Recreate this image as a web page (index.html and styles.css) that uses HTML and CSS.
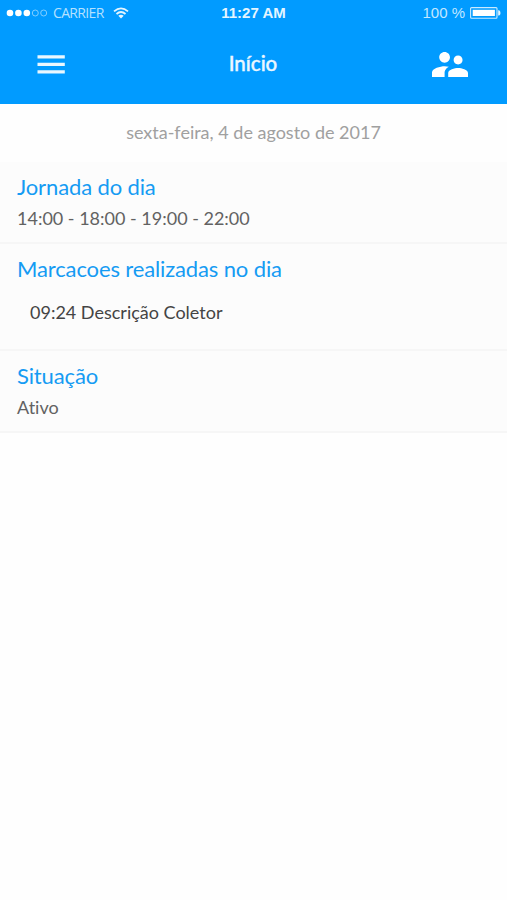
FILE: index.html
```html
<!DOCTYPE html>
<html lang="pt-BR">
<head>
<meta charset="utf-8">
<title>Início</title>
<link rel="stylesheet" href="styles.css">
</head>
<body>
<header class="header">
  <div class="status">
    <div class="status-left">
      <svg class="signal" width="42" height="10" viewBox="0 0 42 10"><g fill="#fff"><circle cx="4" cy="5" r="3.3"/><circle cx="12.4" cy="5" r="3.3"/><circle cx="20.8" cy="5" r="3.3"/></g><g fill="none" stroke="#8fd2ff" stroke-width=".9"><circle cx="29.3" cy="5" r="3"/><circle cx="37.7" cy="5" r="3"/></g></svg>
      <span class="carrier">CARRIER</span>
      <svg class="wifi" width="16" height="12" viewBox="0 0 16 12"><g fill="none" stroke="#e4f5ff" stroke-width="1.8"><path d="M1 4.4Q8-1.6 15 4.4"/><path d="M3.5 7Q8 3 12.5 7"/></g><path fill="#e4f5ff" d="M5.3 8.8Q8 6.5 10.7 8.8L8 11.6z"/></svg>
    </div>
    <span class="clock">11:27 AM</span>
    <div class="status-right">
      <span class="percent">100 %</span>
      <svg class="battery" width="31" height="12" viewBox="0 0 31 12"><rect x=".6" y=".6" width="26.4" height="10.6" rx="1" fill="none" stroke="#c9eaff" stroke-width="1.1"/><rect x="2.7" y="2.8" width="22.2" height="6.2" fill="#fff"/><path fill="#e4f5ff" d="M28.2 3.2h1q1.3 1 1.3 2.7t-1.3 2.7h-1z"/></svg>
    </div>
  </div>
  <nav class="nav">
    <svg class="menu" width="28" height="19" viewBox="0 0 28 19"><path fill="#e9f7ff" d="M.5.3h27.3v3.1H.5zM.5 7.8h27.3v3.1H.5zM.5 15.3h27.3v3.1H.5z"/></svg>
    <h1 class="title">Início</h1>
    <svg class="people" width="36" height="25" viewBox="2 5 20 14" preserveAspectRatio="none"><path fill="#fff" d="M16.5 12c1.38 0 2.49-1.12 2.49-2.5S17.88 7 16.5 7 14 8.12 14 9.5s1.12 2.5 2.5 2.5zM9 11c1.66 0 2.99-1.34 2.99-3S10.66 5 9 5 6 6.34 6 8s1.34 3 3 3zm7.5 3c-1.83 0-5.5.92-5.5 2.75V19h11v-2.25c0-1.83-3.67-2.75-5.5-2.75zM9 13c-2.33 0-7 1.17-7 3.5V19h7v-2.25c0-.85.33-2.34 2.37-3.47C10.5 13.1 9.66 13 9 13z"/></svg>
  </nav>
</header>
<main>
  <p class="date">sexta-feira, 4 de agosto de 2017</p>
  <section class="item">
    <h2 class="heading">Jornada do dia</h2>
    <p class="text">14:00 - 18:00 - 19:00 - 22:00</p>
  </section>
  <section class="item item-marks">
    <h2 class="heading">Marcacoes realizadas no dia</h2>
    <p class="mark">09:24 Descrição Coletor</p>
  </section>
  <section class="item">
    <h2 class="heading">Situação</h2>
    <p class="text">Ativo</p>
  </section>
</main>
</body>
</html>
```
FILE: styles.css
```css
* { box-sizing: border-box; margin: 0; padding: 0; }
body { background: #fefefe; font-family: Lato, "Liberation Sans", sans-serif; font-variant-ligatures: none; }
svg { display: block; flex: none; }
.header { height: 104px; background: #019bff; color: #fff; }
.status { display: grid; grid-template-columns: 1fr auto 1fr; align-items: center; height: 26px; padding: 0 6px 0 6px; }
.status-left, .status-right { display: flex; align-items: center; }
.status-right { justify-content: flex-end; gap: 5px; }
.carrier { margin-left: 5px; font: 14px/18px "Open Sans", sans-serif; letter-spacing: -.65px; color: #b5e1ff; }
.wifi { margin-left: 9px; }
.clock { font: bold 15px/18px "Liberation Sans", sans-serif; color: #e4f5ff; }
.percent { font: 15px/18px "Liberation Sans", sans-serif; color: #c3e7ff; }
.nav { display: grid; grid-template-columns: 1fr auto 1fr; align-items: center; height: 76px; padding: 0 39px 0 37px; }
.title { padding: 0 0 3px 1px; font-size: 20.5px; line-height: 24px; font-weight: 500; color: #eaf7ff; -webkit-text-stroke: .4px #eaf7ff; }
.people { justify-self: end; }
.date { height: 58px; padding-top: 16px; font-size: 18px; line-height: 24px; text-align: center; color: #a0a0a0; }
.item { height: 82px; padding: 11px 17px; background: #fcfcfc; border-bottom: 2px solid #f6f6f6; }
.item-marks { height: 107px; }
.heading { font-size: 22px; line-height: 28px; font-weight: 400; letter-spacing: -.13px; color: #159bf3; }
.text { margin-top: 5px; font-size: 18px; line-height: 24px; color: #626262; }
.mark { margin: 17px 0 0 13px; font-size: 18px; line-height: 24px; color: #444; }
```
